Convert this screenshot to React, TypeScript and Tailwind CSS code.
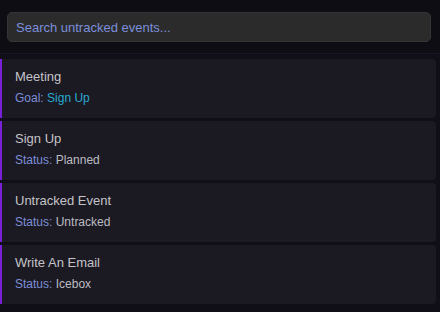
const events = [
  { name: 'Meeting', label: 'Goal:', value: 'Sign Up', kind: 'goal' },
  { name: 'Sign Up', label: 'Status:', value: 'Planned', kind: 'status' },
  { name: 'Untracked Event', label: 'Status:', value: 'Untracked', kind: 'status' },
  { name: 'Write An Email', label: 'Status:', value: 'Icebox', kind: 'status' },
];

export default function App() {
  return (
    <div className="w-[440px] h-[312px] bg-[#0d0d13] flex flex-col overflow-hidden font-['Liberation_Sans',Arial,sans-serif]">
      <div className="px-[7px] pt-[12px] pb-[11px] border-b border-[#161624]">
        <input
          autoFocus
          placeholder="Search untracked events..."
          className="w-[424px] h-[30px] rounded-[5px] bg-[#2b2b2b] border border-[#353535] px-[8px] text-[13px] text-[#c8c8c8] placeholder:text-[#7c8fdc] outline-none caret-[#8a9ad8]"
        />
      </div>
      <div className="flex-1 bg-[#100f17] flex flex-col gap-[3px] pt-[5px] pr-[4px]">
        {events.map((e) => (
          <div
            key={e.name}
            className="h-[59px] bg-[#1b1922] border-l-[2px] border-[#7a1fd8] rounded-r-[4px] pl-[13px] pt-[9px] flex flex-col gap-[5px]"
          >
            <div className="text-[13px] leading-[17px] text-[#c4c4c8]">{e.name}</div>
            <div className="text-[12px] leading-[16px]">
              <span className="text-[#7b8fd8]">{e.label}</span>{' '}
              <span className={e.kind === 'goal' ? 'text-[#29a9d0]' : 'text-[#bdbdc2]'}>{e.value}</span>
            </div>
          </div>
        ))}
      </div>
    </div>
  );
}
